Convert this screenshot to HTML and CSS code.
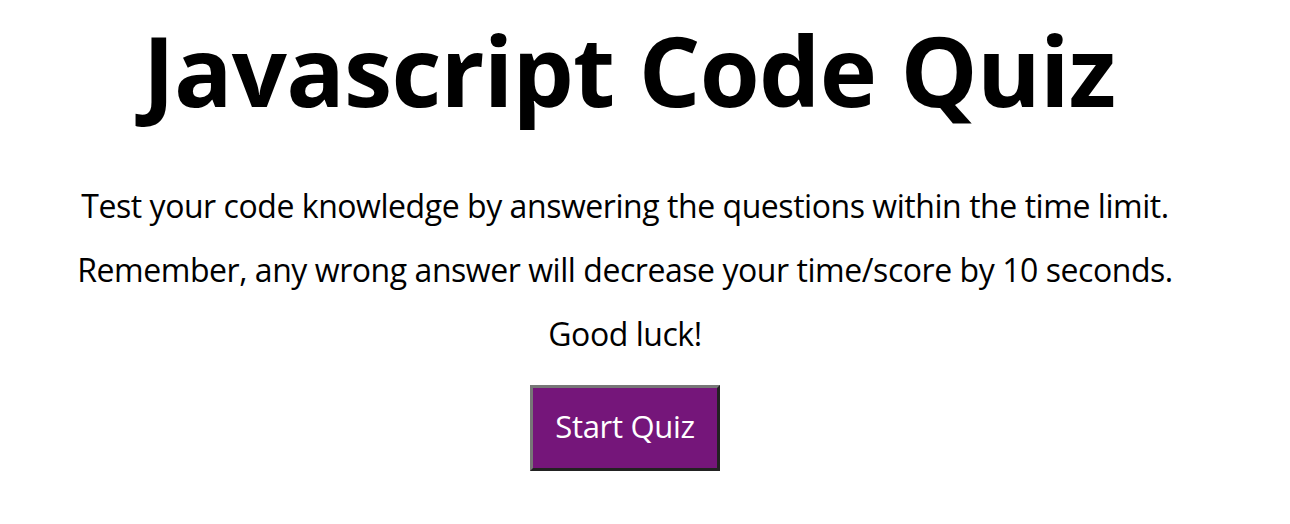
FILE: index.html
```html
<!DOCTYPE html>
<html lang="en">
<head>
<meta charset="utf-8">
<title>Javascript Code Quiz</title>
<link rel="stylesheet" href="styles.css">
</head>
<body>
<main class="page">
  <h1 class="title">Javascript Code Quiz</h1>
  <p class="intro">Test your code knowledge by answering the questions within the time limit.</p>
  <p class="intro">Remember, any wrong answer will decrease your time/score by 10 seconds.</p>
  <p class="intro">Good luck!</p>
  <button class="start-btn" type="button">Start Quiz</button>
</main>
</body>
</html>
```
FILE: styles.css
```css
html, body {
  margin: 0;
  padding: 0;
  background: #ffffff;
}

body {
  font-family: "Open Sans", "Noto Sans", sans-serif;
  color: #000000;
}

.page {
  width: 1250px;
  text-align: center;
}

.title {
  margin: 11px 0 0;
  padding-left: 8px;
  font-size: 97px;
  font-weight: 700;
  line-height: 116px;
  letter-spacing: -0.8px;
}

.intro {
  margin: 24px 0 0;
  font-size: 32px;
  font-weight: 400;
  line-height: 40px;
  letter-spacing: -0.45px;
}

.title + .intro {
  margin-top: 59px;
}

.start-btn {
  display: block;
  box-sizing: border-box;
  width: 190px;
  height: 86px;
  margin: 31px auto 0;
  padding: 0 0 4px;
  background: #75167a;
  color: #ffffff;
  font-family: "Open Sans", "Noto Sans", sans-serif;
  font-size: 31px;
  font-weight: 400;
  line-height: 76px;
  letter-spacing: -0.3px;
  border-style: solid;
  border-width: 3px;
  border-color: #777777 #222222 #222222 #777777;
}
```
